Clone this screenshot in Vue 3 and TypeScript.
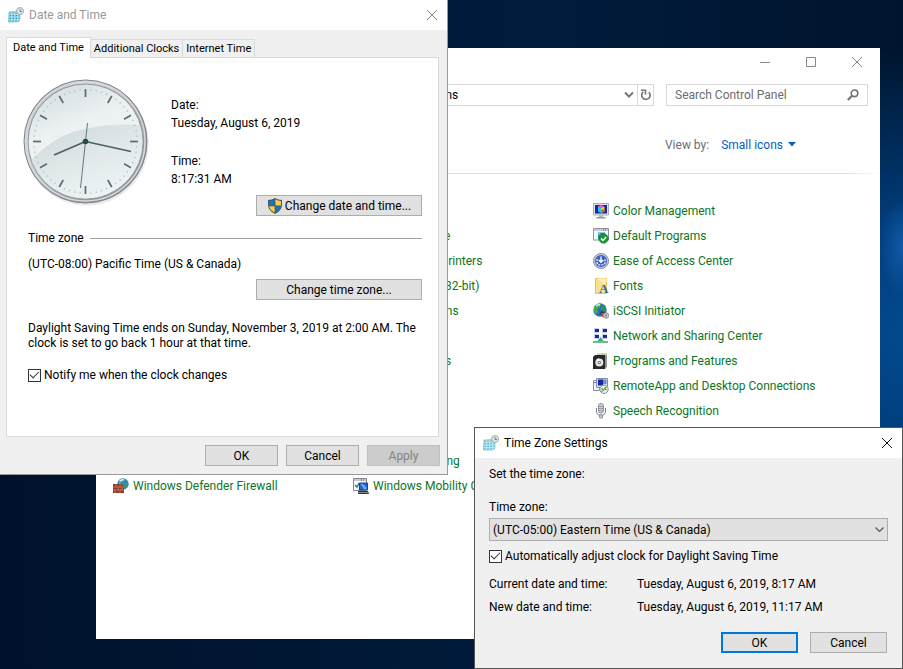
<script setup lang="ts">
import { ref } from 'vue'

interface PanelItem {
  label: string
  icon: string
}

const items: PanelItem[] = [
  { label: 'Administrative Tools', icon: '' },
  { label: 'AutoPlay', icon: '' },
  { label: 'Color Management', icon: 'color' },
  { label: 'Credential Manager', icon: '' },
  { label: 'Date and Time', icon: '' },
  { label: 'Default Programs', icon: 'defaults' },
  { label: 'Device Manager', icon: '' },
  { label: 'Devices and Printers', icon: '' },
  { label: 'Ease of Access Center', icon: 'ease' },
  { label: 'File Explorer Options', icon: '' },
  { label: 'Flash Player (32-bit)', icon: '' },
  { label: 'Fonts', icon: 'fonts' },
  { label: 'Indexing Options', icon: '' },
  { label: 'Internet Options', icon: '' },
  { label: 'iSCSI Initiator', icon: 'iscsi' },
  { label: 'Keyboard', icon: '' },
  { label: 'Mouse', icon: '' },
  { label: 'Network and Sharing Center', icon: 'network' },
  { label: 'Phone and Modem', icon: '' },
  { label: 'Power Options', icon: '' },
  { label: 'Programs and Features', icon: 'programs' },
  { label: 'Recovery', icon: '' },
  { label: 'Region', icon: '' },
  { label: 'RemoteApp and Desktop Connections', icon: 'remote' },
  { label: 'Security and Maintenance', icon: '' },
  { label: 'Sound', icon: '' },
  { label: 'Speech Recognition', icon: 'speech' },
  { label: 'Storage Spaces', icon: '' },
  { label: 'Sync Center', icon: '' },
  { label: 'System', icon: '' },
  { label: 'Taskbar and Navigation', icon: '' },
  { label: 'Troubleshooting', icon: '' },
  { label: 'User Accounts', icon: '' },
  { label: 'Windows Defender Firewall', icon: 'firewall' },
  { label: 'Windows Mobility Center', icon: 'mobility' },
]

const tabs: string[] = ['Date and Time', 'Additional Clocks', 'Internet Time']
const activeTab = ref<string>(tabs[0])
const notify = ref<boolean>(true)
const autoAdjust = ref<boolean>(true)
const zone = ref<string>('(UTC-05:00) Eastern Time (US & Canada)')
const search = ref<string>('')

const hourTicks: number[] = Array.from({ length: 12 }, (_, i) => i * 30)
const minuteTicks: number[] = Array.from({ length: 60 }, (_, i) => i)
  .filter((i) => i % 5 !== 0)
  .map((i) => i * 6)
</script>

<template>
  <main class="desktop">
    <section class="window panel-window" aria-label="All Control Panel Items">
      <header class="caption">
        <button type="button" aria-label="Minimize">
          <svg width="11" height="11" viewBox="0 0 11 11"><path d="M0 5.5H10" /></svg>
        </button>
        <button type="button" aria-label="Maximize">
          <svg width="11" height="11" viewBox="0 0 11 11"><path d="M.5 .5H9.500V9.500H.5Z" /></svg>
        </button>
        <button type="button" aria-label="Close">
          <svg width="11" height="11" viewBox="0 0 11 11"><path d="M0 0L10 10M10 0L0 10" /></svg>
        </button>
      </header>

      <div class="toolbar">
        <div class="address">
          <nav class="crumbs" aria-label="Address">
            <a href="#">Control Panel</a><span>›</span><a href="#">All Control Panel Items</a>
          </nav>
          <button type="button" aria-label="Previous locations">
            <svg width="10" height="8" viewBox="0 0 10 8"><path d="M1 1.500L5 5.500L9 1.500" fill="none" stroke="#777" stroke-width="2" /></svg>
          </button>
          <button type="button" class="refresh" aria-label="Refresh">
            <svg width="12" height="12" viewBox="0 0 12 12">
              <path d="M8.800 3.200A4.200 4.200 0 1 1 3.200 3" fill="none" stroke="#777" stroke-width="1.700" />
              <path d="M1 1.200H5.500V5.500" fill="none" stroke="#777" stroke-width="1.600" />
            </svg>
          </button>
        </div>
        <div class="search">
          <input v-model="search" type="text" placeholder="Search Control Panel" aria-label="Search Control Panel" />
          <svg width="12" height="12" viewBox="0 0 12 12">
            <circle cx="7.500" cy="4.300" r="3.300" fill="none" stroke="#707070" stroke-width="1.600" />
            <path d="M5 6.800L.8 11" stroke="#707070" stroke-width="2" />
          </svg>
        </div>
      </div>

      <div class="view-row">
        <span>View by:</span>
        <button type="button">
          Small icons
          <svg width="8" height="5" viewBox="0 0 8 5"><path d="M0 0H8L4 4.500Z" fill="#0a5cbf" /></svg>
        </button>
      </div>

      <ul class="items">
        <li v-for="item in items" :key="item.label">
          <a href="#">
            <svg class="icon" width="16" height="16" viewBox="0 0 16 16" aria-hidden="true">
              <g v-if="item.icon === 'color'">
                <path d="M.5 .5H15.500V12H.5Z" fill="#dfe2e6" stroke="#a8adb5" />
                <path d="M2 2H14V10.500H2Z" fill="#1725a8" />
                <path d="M5 3.500L8 3V10L5 8.500Z" fill="#19d0e8" /><path d="M8 3L11.500 4V8.500L8 10Z" fill="#f5d51c" />
                <path d="M5 3.500L8 2L11.500 3.500L8 5.500Z" fill="#f25bd0" /><path d="M8 7L11.500 6V8.500L8 10Z" fill="#f05a28" />
                <path d="M6 12H10V14H6Z" fill="#b6bac0" /><path d="M3.500 14H12.500V15.500H3.500Z" fill="#90959d" />
              </g>
              <g v-else-if="item.icon === 'defaults'">
                <path d="M.5 .5H15.500V12H.5Z" fill="#f6f9fc" stroke="#8b949e" /><path d="M1 1H15V3H1Z" fill="#c6ccd3" />
                <path d="M10 2H11M12 2H13" stroke="#59626d" /><path d="M5 4.500H12V6L7 11H5Z" fill="#2d8fc5" />
                <path d="M5.500 5L8 8" stroke="#b6ddf2" /><circle cx="10.500" cy="10.500" r="4.700" fill="#149b30" stroke="#087421" stroke-width=".7" />
                <path d="M8 10.500L9.900 12.400L13.200 8.900" fill="none" stroke="#fff" stroke-width="1.500" />
              </g>
              <g v-else-if="item.icon === 'ease'">
                <circle cx="8" cy="8" r="7.500" fill="#c7cfdf" stroke="#7f8bab" /><circle cx="8" cy="8" r="6" fill="#3e5fc2" />
                <path d="M8 3.500V9M5.800 7L8 9.300L10.200 7" fill="none" stroke="#fff" stroke-width="1.400" />
                <path d="M4 6V9.500Q4.500 12 8 12Q11.500 12 12 9.500V6" fill="none" stroke="#f1f5ff" stroke-width="1.300" stroke-dasharray="2 1" />
              </g>
              <g v-else-if="item.icon === 'fonts'">
                <path d="M2.500 .5H13.500V15.500H2.500Z" fill="#fae08a" stroke="#e8c25b" /><path d="M4 .5H13.500V4L11 6Z" fill="#fdf0b8" />
                <text x="6" y="15" class="font-mark">A</text>
              </g>
              <g v-else-if="item.icon === 'iscsi'">
                <circle cx="7" cy="7" r="6.700" fill="#2a70bd" /><path d="M2 3Q5 0 8 1L7 4L4 6L5 9L3 11Q0 8 1 4Z" fill="#43ad4f" />
                <path d="M9 2L12 3L13.500 7L10 8L8 5Z" fill="#2f9347" /><path d="M3 3Q5 1 7 2" stroke="#d9f4f7" stroke-width="1.400" fill="none" />
                <path d="M6 11L8 8L12 9L11 12Z" fill="#314c39" /><path d="M9 10H13L12 14H9Z" fill="#d44e3d" />
                <circle cx="13" cy="12.500" r="2.800" fill="#c0c6cc" stroke="#737b84" stroke-width=".7" /><circle cx="13" cy="12.500" r="1" fill="#5ba841" />
              </g>
              <g v-else-if="item.icon === 'network'">
                <path d="M1 0H6V5H1ZM9 0H14V5H9ZM1 6H6V11H1ZM9 6H14V11H9Z" fill="#c8d1ed" />
                <path d="M2 1H6V4H2ZM10 1H14V4H10ZM2 7H6V10H2ZM10 7H14V10H10Z" fill="#2025a0" />
                <path d="M7.500 9L11 13.500H4Z" fill="#38ad71" /><path d="M0 14H15" stroke="#69bd92" stroke-width="2" />
              </g>
              <g v-else-if="item.icon === 'programs'">
                <path d="M4 .5H14V12H4Z" fill="#dccd9a" /><path d="M8 0H14V11H8Z" fill="#a7d5a5" opacity=".6" />
                <path d="M0 4L2 2H12V16H0Z" fill="#282828" /><path d="M12 3L14 1.500V14L12 16Z" fill="#929292" />
                <circle cx="6.300" cy="9.500" r="4" fill="#e4e5e7" /><path d="M6.300 9.500L3.500 6.700A4 4 0 0 1 6 5.500Z" fill="#fff" />
                <circle cx="6.300" cy="9.500" r="1.600" fill="#666" /><circle cx="6.300" cy="9.500" r=".7" fill="#fff" />
              </g>
              <g v-else-if="item.icon === 'remote'">
                <path d="M.5 2.500H6.500V12.500H.5Z" fill="#eef2fb" stroke="#8390b5" /><path d="M1 4H4V5H1Z" fill="#617ac0" />
                <path d="M3.500 .5H14.500V9.500H3.500Z" fill="#d8ddea" stroke="#8290b0" /><path d="M5 1.500H10V7.500H5Z" fill="#1826a5" /><path d="M10 1.500H13.500V6H10Z" fill="#7488d8" />
                <circle cx="11" cy="11.300" r="4.200" fill="#ebf3e6" stroke="#87908c" />
                <path d="M8.500 10.500L10.500 12L8.500 13.500M13.500 9L11.500 10.500L13.500 12" fill="none" stroke="#41a344" stroke-width="1.300" />
              </g>
              <g v-else-if="item.icon === 'speech'">
                <rect x="5.500" y=".5" width="5" height="9.500" rx="2.500" fill="#e5e6ea" stroke="#898c99" />
                <path d="M6 3.500H10M6 5.500H10M6 7.500H10" stroke="#8c8f9c" /><path d="M3.500 5V9Q4 12.500 8 12.500Q12 12.500 12.500 9V5" fill="none" stroke="#81848f" />
                <path d="M8 1V15" stroke="#aeb1bb" /><path d="M6.500 12H9.500V15H6.500Z" fill="#c8cad1" stroke="#858894" stroke-width=".8" />
              </g>
              <g v-else-if="item.icon === 'firewall'">
                <circle cx="10" cy="6" r="5.700" fill="#3784c8" /><path d="M6 2Q9 0 11 1L9 4L6 6Z" fill="#5fc268" /><path d="M12 4L15 5Q16 8 13 10L11 8Z" fill="#3b9b52" />
                <path d="M7 3Q9 1 11 2" fill="none" stroke="#d3f2f5" stroke-width="1.500" /><path d="M0 6H8L11 8V15H0Z" fill="#933827" />
                <path d="M0 9H11M0 12H11M3 6V9M7 6V9M5 9V12M9 9V12M2 12V15M7 12V15" stroke="#cc8b7a" stroke-width=".7" />
              </g>
              <g v-else-if="item.icon === 'mobility'">
                <path d="M.5 .5H13.500V12.500H.5Z" fill="#f8fafc" stroke="#7f8790" /><path d="M1 1H13V3H1Z" fill="#c4cad0" />
                <path d="M8 2H9M10 2H11" stroke="#555d66" />
                <path d="M2 7L4 9L6 5" fill="none" stroke="#16819c" stroke-width="1.400" /><path d="M6.500 5H14.500V12H6.500Z" fill="#1765d7" stroke="#3a3e5c" />
                <path d="M7.500 5.500L10 6L13.500 9.500V11.500H11Z" fill="#6ca7f4" /><path d="M5 13H15L16 16H5Z" fill="#33363e" /><path d="M5.500 14.500H15" stroke="#d2d4dc" stroke-dasharray="1 1" />
              </g>
            </svg>
            <span>{{ item.label }}</span>
          </a>
        </li>
      </ul>
    </section>

    <section class="window date-window" role="dialog" aria-labelledby="date-title">
      <header class="titlebar inactive">
        <svg width="16" height="16" viewBox="0 0 16 16" aria-hidden="true">
          <path d="M1 5L12 4.500V13L10 15H.5Z" fill="#6cc6df" stroke="#7fb8c9" stroke-width=".7" />
          <path d="M1 7.500H12M1 10H12M1 12.500H12M3.500 5V15M6.500 5V15M9.500 5V15" stroke="#d6f1f8" stroke-width=".5" />
          <path d="M2 8.500H3M5 8.500H6M8 8.500H9M2 11.500H3M5 11.500H6M8 11.500H9" stroke="#238aad" />
          <circle cx="12" cy="4" r="3.500" fill="#dde3e3" stroke="#a3adb0" /><path d="M12 2V4.500H14" fill="none" stroke="#647175" stroke-width=".8" />
        </svg>
        <h1 id="date-title">Date and Time</h1>
        <button type="button" aria-label="Close">
          <svg width="11" height="11" viewBox="0 0 11 11"><path d="M0 0L10 10M10 0L0 10" /></svg>
        </button>
      </header>

      <div class="date-body">
        <div class="tabs" role="tablist">
          <button
            v-for="tab in tabs"
            :key="tab"
            type="button"
            role="tab"
            :aria-selected="activeTab === tab"
            :class="{ active: activeTab === tab }"
            @click="activeTab = tab"
          >{{ tab }}</button>
        </div>

        <div class="tab-panel" role="tabpanel">
          <div class="now">
            <svg width="126" height="128" viewBox="0 0 126 128" role="img" aria-label="Analog clock">
              <defs>
                <linearGradient id="rim" x1="0" y1="0" x2="1" y2="1">
                  <stop offset="0" stop-color="#85898f" /><stop offset=".25" stop-color="#d9dbe0" />
                  <stop offset=".6" stop-color="#a2a4a9" /><stop offset="1" stop-color="#85868b" />
                </linearGradient>
                <linearGradient id="face" x1="0" y1="0" x2=".4" y2="1">
                  <stop offset="0" stop-color="#cfdadf" /><stop offset=".45" stop-color="#edf1f2" /><stop offset="1" stop-color="#eff4f5" />
                </linearGradient>
                <linearGradient id="sheen" x1="0" y1="0" x2=".6" y2="1">
                  <stop offset="0" stop-color="#c8d3d6" /><stop offset="1" stop-color="#edf3f4" stop-opacity=".6" />
                </linearGradient>
                <clipPath id="dial"><circle cx="62.500" cy="62.500" r="57" /></clipPath>
              </defs>
              <circle cx="63.500" cy="64.500" r="62" fill="#e9e9eb" />
              <circle cx="62.500" cy="62.500" r="61.500" fill="url(#rim)" stroke="#7e8187" />
              <circle cx="62.500" cy="62.500" r="59.500" fill="none" stroke="#d7d9de" stroke-width="1.500" />
              <circle cx="62.500" cy="62.500" r="57.500" fill="url(#face)" stroke="#8f9499" />
              <path d="M3 86Q20 68 38 58Q70 43 121 46V122H3Z" fill="url(#sheen)" clip-path="url(#dial)" />
              <g stroke="#b3bcc0" stroke-width="1.200">
                <path v-for="angle in minuteTicks" :key="angle" d="M62.500 10V11.500" :transform="`rotate(${angle} 62.5 62.5)`" />
              </g>
              <g stroke="#5a6d71" stroke-width="1.700">
                <path v-for="angle in hourTicks" :key="angle" d="M62.500 10V18" :transform="`rotate(${angle} 62.5 62.5)`" />
              </g>
              <path d="M62.500 62.500L31 76" stroke="#4d6063" stroke-width="1.700" />
              <path d="M62.500 62.500L108 72.500" stroke="#4d6063" stroke-width="1.700" />
              <path d="M64.500 44L57.500 109" stroke="#66777a" />
              <circle cx="62.500" cy="62.500" r="2.800" fill="#244c50" />
            </svg>
            <div class="now-info">
              <dl>
                <dt>Date:</dt>
                <dd>Tuesday, August 6, 2019</dd>
              </dl>
              <dl>
                <dt>Time:</dt>
                <dd>8:17:31 AM</dd>
              </dl>
              <button type="button" class="button wide">
                <svg width="16" height="16" viewBox="0 0 16 16" aria-hidden="true">
                  <path d="M8 0Q11 2 15 2V7Q14.500 13 8 16Q1.500 13 1 7V2Q5 2 8 0Z" fill="#4b5258" />
                  <path d="M7.600 1.300V7.600H2V3Q5 3 7.600 1.300Z" fill="#1674c4" /><path d="M8.400 1.300Q11 3 14 3V7.600H8.400Z" fill="#f8cd47" />
                  <path d="M2.100 8.300H7.600V14.600Q3 12.500 2.100 8.300Z" fill="#f8cd47" /><path d="M8.400 8.300H13.900Q13 12.500 8.400 14.600Z" fill="#1674c4" />
                </svg>
                Change date and time...
              </button>
            </div>
          </div>

          <div class="zone">
            <h2>Time zone</h2>
            <p class="zone-name">(UTC-08:00) Pacific Time (US &amp; Canada)</p>
            <button type="button" class="button wide">Change time zone...</button>
            <p class="dst">Daylight Saving Time ends on Sunday, November 3, 2019 at 2:00 AM. The clock is set to go back 1 hour at that time.</p>
            <label class="check"><input v-model="notify" type="checkbox" />Notify me when the clock changes</label>
          </div>
        </div>

        <footer class="date-actions">
          <button type="button" class="button">OK</button>
          <button type="button" class="button">Cancel</button>
          <button type="button" class="button" disabled>Apply</button>
        </footer>
      </div>
    </section>

    <section class="window zone-window" role="dialog" aria-labelledby="zone-title">
      <header class="titlebar">
        <svg width="16" height="16" viewBox="0 0 16 16" aria-hidden="true">
          <path d="M1 5L12 4.500V13L10 15H.5Z" fill="#7dd0e4" stroke="#7fb8c9" stroke-width=".7" />
          <path d="M1 7.500H12M1 10H12M1 12.500H12M3.500 5V15M6.500 5V15M9.500 5V15" stroke="#e2f6fa" stroke-width=".5" />
          <path d="M2 8.500H3M5 8.500H6M8 8.500H9M2 11.500H3M5 11.500H6M8 11.500H9" stroke="#50b6d0" />
          <circle cx="12" cy="4" r="3.500" fill="#dde3e3" stroke="#a3adb0" /><path d="M12 2V4.500H14" fill="none" stroke="#647175" stroke-width=".8" />
        </svg>
        <h1 id="zone-title">Time Zone Settings</h1>
        <button type="button" aria-label="Close">
          <svg width="11" height="11" viewBox="0 0 11 11"><path d="M0 0L10 10M10 0L0 10" /></svg>
        </button>
      </header>

      <div class="zone-body">
        <p class="lead">Set the time zone:</p>
        <label class="select-label" for="zone-select">Time zone:</label>
        <div class="select">
          <select id="zone-select" v-model="zone">
            <option>(UTC-05:00) Eastern Time (US &amp; Canada)</option>
          </select>
          <svg width="9" height="6" viewBox="0 0 9 6" aria-hidden="true"><path d="M.5 .5L4.500 4.500L8.500 .5" fill="none" stroke="#555" stroke-width="1.200" /></svg>
        </div>
        <label class="check"><input v-model="autoAdjust" type="checkbox" />Automatically adjust clock for Daylight Saving Time</label>
        <dl class="times">
          <dt>Current date and time:</dt>
          <dd>Tuesday, August 6, 2019, 8:17 AM</dd>
          <dt>New date and time:</dt>
          <dd>Tuesday, August 6, 2019, 11:17 AM</dd>
        </dl>
        <footer class="zone-actions">
          <button type="button" class="button default">OK</button>
          <button type="button" class="button">Cancel</button>
        </footer>
      </div>
    </section>
  </main>
</template>

<style>
body {
  margin: 0;
}
</style>

<style scoped>
.desktop {
  position: relative;
  min-height: 100vh;
  overflow: hidden;
  background:
    radial-gradient(ellipse 24px 50px at 100% 37%, #1259a5, transparent),
    radial-gradient(ellipse 400px 290px at 104% 50%, #024c93 0%, #003d7b 40%, transparent 100%),
    linear-gradient(90deg, #00122b, #001c3c 60%, #00142d);
  color: #000;
  font: 12px/16px Roboto, "Open Sans", sans-serif;
}

.desktop *,
.desktop *::before {
  box-sizing: border-box;
}

h1,
h2,
p,
dl,
dd,
ul {
  margin: 0;
  padding: 0;
  font-size: 12px;
  font-weight: 400;
}

button,
input,
select {
  margin: 0;
  padding: 0;
  border: 0;
  background: transparent;
  color: inherit;
  font: inherit;
}

a {
  color: inherit;
  text-decoration: none;
}

.window {
  position: absolute;
}

.panel-window {
  top: 48px;
  left: 96px;
  width: 784px;
  min-height: 591px;
  background: #fff;
}

.caption {
  display: flex;
  justify-content: flex-end;
  height: 28px;
}

.caption button {
  display: flex;
  align-items: center;
  justify-content: center;
  width: 46px;
  height: 28px;
}

.caption path {
  fill: none;
  stroke: #888;
}

.toolbar {
  display: flex;
  gap: 12px;
  padding: 8px 12px 0 96px;
}

.address {
  display: flex;
  flex: 1;
  align-items: center;
  height: 22px;
  border: 1px solid #d9d9d9;
}

.crumbs {
  display: flex;
  flex: 1;
  gap: 12px;
  padding-left: 44px;
  white-space: nowrap;
}

.address button {
  display: flex;
  align-items: center;
  justify-content: center;
  width: 16px;
  height: 100%;
}

.address .refresh {
  border-left: 1px solid #d9d9d9;
}

.search {
  display: flex;
  align-items: center;
  width: 202px;
  height: 22px;
  padding: 0 8px;
  border: 1px solid #d9d9d9;
}

.search input {
  flex: 1;
  min-width: 0;
  outline: 0;
}

.search input::placeholder {
  color: #6d6d6d;
  opacity: 1;
}

.view-row {
  display: flex;
  align-items: center;
  justify-content: flex-end;
  gap: 12px;
  height: 68px;
  padding: 10px 84px 0 0;
  border-bottom: 1px solid;
  border-image: linear-gradient(90deg, #d9dde0 95%, #fff) 1;
  color: #6a6d73;
}

.view-row button {
  display: flex;
  align-items: center;
  gap: 5px;
  color: #0a5cbf;
}

.items {
  display: grid;
  grid-template-columns: repeat(3, 240px);
  padding: 24px 0 0 17px;
  list-style: none;
}

.items a {
  display: flex;
  align-items: center;
  gap: 4px;
  height: 25px;
  color: #0d7525;
  white-space: nowrap;
}

.icon {
  flex: none;
}

.font-mark {
  fill: #1a6fa5;
  font: bold 13px "Liberation Serif", serif;
}

.titlebar {
  display: flex;
  align-items: center;
  gap: 5px;
  height: 30px;
  padding: 0 9px 0 8px;
  background: #fff;
}

.titlebar h1 {
  flex: 1;
}

.titlebar button {
  display: flex;
}

.titlebar button path {
  stroke: #111;
}

.inactive h1 {
  color: #999;
}

.inactive button path {
  stroke: #888;
}

.date-window {
  top: 0;
  left: 0;
  width: 448px;
  border-right: 1px solid #999;
  border-bottom: 1px solid #999;
  background: #f0f0f0;
}

.date-body {
  padding: 7px 7px 8px 6px;
}

.tabs {
  display: flex;
  align-items: flex-end;
  font-size: 11px;
}

.tabs button {
  height: 18px;
  padding: 0 3px;
  border: 1px solid #d9d9d9;
  border-bottom: 0;
  border-left: 0;
  white-space: nowrap;
}

.tabs .active {
  position: relative;
  height: 21px;
  margin-bottom: -1px;
  padding: 0 6px;
  border-left: 1px solid #d9d9d9;
  background: #fff;
}

.tab-panel {
  margin-right: 1px;
  padding: 21px 16px 53px;
  border: 1px solid #d9d9d9;
  background: #fff;
}

.now {
  display: grid;
  grid-template-columns: 126px 1fr;
  gap: 22px;
}

.now-info {
  display: flex;
  flex-direction: column;
  gap: 20px;
  padding-top: 17px;
  line-height: 18px;
}

.now-info .button {
  margin-top: -13px;
}

.button {
  display: flex;
  align-items: center;
  justify-content: center;
  gap: 2px;
  width: 73px;
  height: 21px;
  border: 1px solid #adadad;
  background: #e1e1e1;
  line-height: 16px;
}

.button:disabled {
  border-color: #bfbfbf;
  background: #ccc;
  color: #838383;
}

.wide {
  align-self: flex-end;
  width: 166px;
}

.zone {
  display: flex;
  flex-direction: column;
  margin-top: 14px;
  padding-left: 5px;
}

.zone h2 {
  display: flex;
  align-items: center;
  gap: 6px;
}

.zone h2::after {
  flex: 1;
  height: 1px;
  background: #a0a0a0;
  content: "";
}

.zone-name {
  margin: 10px 0 7px;
}

.dst {
  margin: 21px 0 16px;
  line-height: 15px;
}

.check {
  display: flex;
  align-items: center;
  gap: 3px;
}

.check input {
  display: grid;
  width: 13px;
  height: 13px;
  place-items: center;
  border: 1px solid #333;
  appearance: none;
  background: #fff;
}

.check input:checked::before {
  width: 9px;
  height: 5px;
  margin-top: -3px;
  border: solid #333;
  border-width: 0 0 1px 1px;
  content: "";
  transform: rotate(-45deg);
}

.date-actions {
  display: flex;
  justify-content: flex-end;
  gap: 8px;
  padding-top: 8px;
}

.zone-window {
  top: 427px;
  left: 474px;
  width: 429px;
  border: 1px solid #555;
  background: #f0f0f0;
}

.zone-body {
  display: flex;
  flex-direction: column;
  padding: 8px 14px 15px;
}

.select-label {
  margin: 17px 0 3px;
}

.select {
  display: grid;
  align-items: center;
}

.select select {
  grid-area: 1 / 1;
  height: 23px;
  padding-left: 3px;
  border: 1px solid #adadad;
  border-radius: 0;
  appearance: none;
  background: #e1e1e1;
}

.select svg {
  grid-area: 1 / 1;
  justify-self: end;
  margin-right: 4px;
  pointer-events: none;
}

.zone-body .check {
  margin: 7px 0 12px;
}

.times {
  display: grid;
  grid-template-columns: 148px 1fr;
  row-gap: 7px;
}

.zone-actions {
  display: flex;
  justify-content: flex-end;
  gap: 12px;
  padding: 17px 1px 0 0;
}

.zone-actions .button {
  width: 77px;
}

.default {
  border: 2px solid #0078d7;
}
</style>
